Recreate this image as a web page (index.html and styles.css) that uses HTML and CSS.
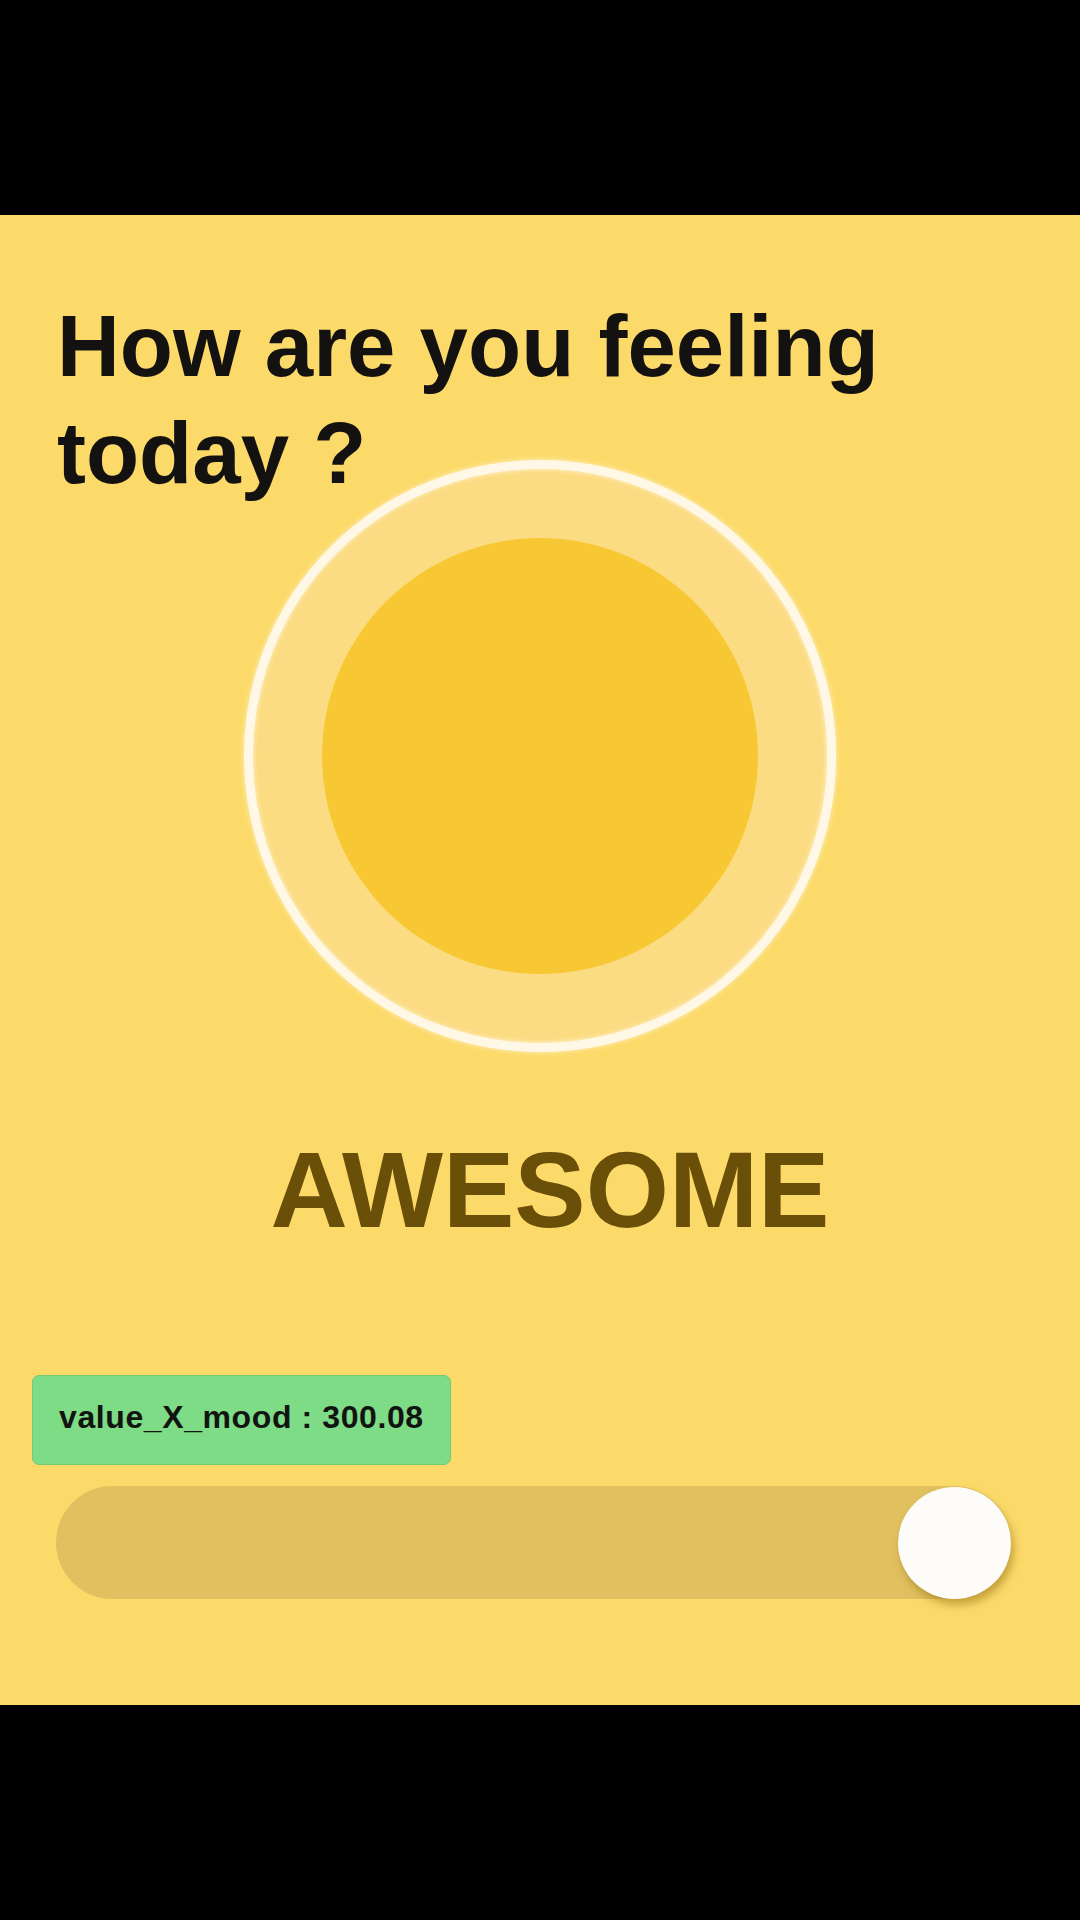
FILE: index.html
```html
<!DOCTYPE html>
<html>
<head>
<meta charset="utf-8">
<link rel="stylesheet" href="styles.css">
</head>
<body>
<div class="screen">
  <h1 class="title">How are you feeling<br>today ?</h1>
  <div class="mood-wrap">
    <div class="mood-ring">
      <div class="mood-core"></div>
    </div>
  </div>
  <div class="mood-label">AWESOME</div>
  <div class="controls">
    <div class="badge">value_X_mood : 300.08</div>
    <div class="track">
      <div class="thumb"></div>
    </div>
  </div>
</div>
</body>
</html>
```
FILE: styles.css
```css
html, body {
  margin: 0;
  padding: 0;
  background: #000;
  width: 1080px;
  height: 1920px;
  overflow: hidden;
}
.screen {
  margin-top: 215px;
  height: 1490px;
  background: #fcda6a;
  display: flex;
  flex-direction: column;
  font-family: "Liberation Sans", Arial, sans-serif;
}
.title {
  margin: 77px 0 0 0;
  padding-left: 57px;
  font-size: 87px;
  line-height: 107px;
  font-weight: 700;
  color: #141210;
}
.mood-wrap {
  margin-top: -46px;
  display: flex;
  justify-content: center;
}
.mood-ring {
  width: 592px;
  height: 592px;
  box-sizing: border-box;
  border-radius: 50%;
  border: 9px solid #fff8e6;
  background: #fcdc82;
  box-shadow: 0 0 5px rgba(255, 250, 235, 0.8), inset 0 0 5px rgba(255, 250, 235, 0.8);
  display: flex;
  align-items: center;
  justify-content: center;
}
.mood-core {
  width: 436px;
  height: 436px;
  border-radius: 50%;
  background: #f8c834;
}
.mood-label {
  margin-top: 85px;
  padding-left: 20px;
  text-align: center;
  font-size: 107px;
  line-height: 107px;
  font-weight: 700;
  color: #6a4f08;
}
.controls {
  margin-top: 131px;
  padding-left: 32px;
  display: flex;
  flex-direction: column;
  align-items: flex-start;
}
.badge {
  box-sizing: border-box;
  height: 90px;
  width: 419px;
  padding: 0 0 6px 26px;
  display: flex;
  align-items: center;
  background: #7edb86;
  border: 1px solid #72c97a;
  border-radius: 7px;
  font-size: 32px;
  font-weight: 700;
  letter-spacing: 0.6px;
  color: #121412;
}
.track {
  position: relative;
  margin-top: 21px;
  margin-left: 24px;
  width: 955px;
  height: 113px;
  border-radius: 57px;
  background: #e1c05f;
}
.thumb {
  position: absolute;
  right: 0;
  top: 1px;
  width: 113px;
  height: 112px;
  border-radius: 50%;
  background: #fdfcf8;
  box-shadow: 3px 6px 8px rgba(130, 95, 0, 0.45);
}
```
